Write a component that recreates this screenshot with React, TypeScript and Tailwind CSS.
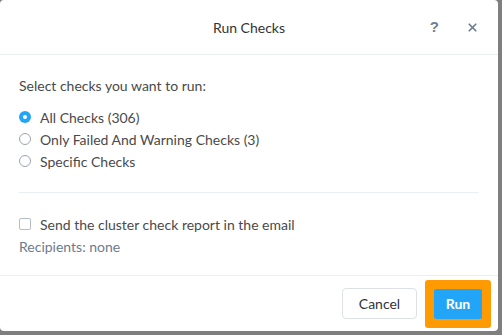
import { X } from "lucide-react";

const OPTIONS = [
  { label: "All Checks (306)", checked: true },
  { label: "Only Failed And Warning Checks (3)", checked: false },
  { label: "Specific Checks", checked: false },
];

function Radio({ checked }: { checked: boolean }) {
  return checked ? (
    <span className="flex h-[12px] w-[12px] items-center justify-center rounded-full bg-[#22a5f7]">
      <span className="h-[4px] w-[4px] rounded-full bg-white" />
    </span>
  ) : (
    <span className="h-[12px] w-[12px] rounded-full border border-[#9aa5b1] bg-white" />
  );
}

export default function App() {
  return (
    <div className="h-[335px] w-[502px] bg-[#7f7f7f] font-['Lato',sans-serif] text-[14px] text-[#4a4a4a]">
      <div className="flex h-[331px] w-[498px] flex-col rounded-[4px] bg-white">
        {/* header */}
        <div className="relative flex h-[55px] items-center justify-center border-b border-[#eceff2]">
          <span className="text-[14px] text-[#333]">Run Checks</span>
          <div className="absolute right-[19px] top-0 flex h-full items-center gap-[27px] text-[#6f7e8f]">
            <span className="font-['Liberation_Sans',sans-serif] text-[15px] font-bold">?</span>
            <X size={13} strokeWidth={3.2} />
          </div>
        </div>

        {/* body */}
        <div className="flex flex-1 flex-col px-[19px] pt-[23px]">
          <p className="leading-[16px]">Select checks you want to run:</p>
          <div className="mt-[15px] flex flex-col gap-[6px]">
            {OPTIONS.map((o) => (
              <div key={o.label} className="flex h-[16px] items-center gap-[9px]">
                <Radio checked={o.checked} />
                <span>{o.label}</span>
              </div>
            ))}
          </div>
          <div className="mt-[23px] border-t border-[#eceff2]" />
          <div className="mt-[23px] flex h-[16px] items-center gap-[9px]">
            <span className="h-[12px] w-[12px] rounded-[2px] border border-[#b4bdc7] bg-white" />
            <span>Send the cluster check report in the email</span>
          </div>
          <p className="mt-[7px] leading-[16px] text-[#6b7b8c]">Recipients: none</p>
        </div>

        {/* footer */}
        <div className="flex h-[56px] items-center justify-end gap-[8px] border-t border-[#eceff2] pr-[7px]">
          <button className="h-[31px] w-[75px] rounded-[4px] border border-[#dde1e6] bg-white text-[14px] text-[#333]">
            Cancel
          </button>
          <div className="rounded-[3px] bg-[#ff9a00] p-[9px]">
            <button className="block h-[30px] w-[48px] rounded-[2px] bg-[#22a5f7] text-[14px] font-bold text-white">
              Run
            </button>
          </div>
        </div>
      </div>
    </div>
  );
}
